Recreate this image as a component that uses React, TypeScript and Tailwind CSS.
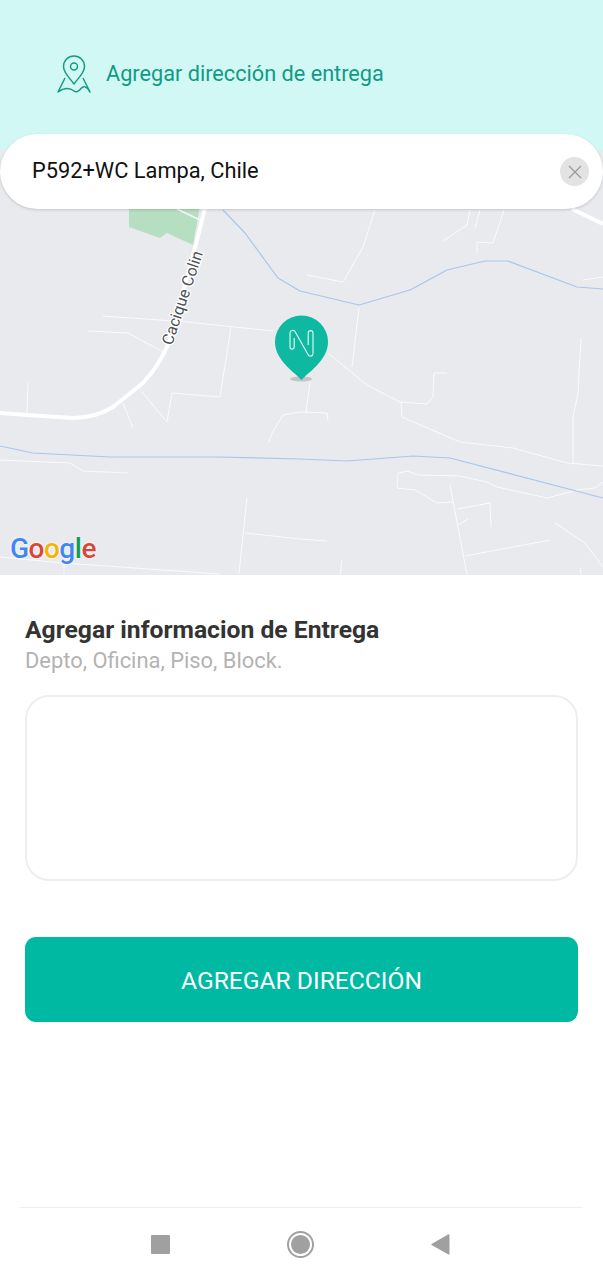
const THIN_ROADS = [
  'M103 316 L187 322 L273 331',
  'M231 327 L220 397 L172 393 L167 422 L142 392',
  'M88 331 L128 333 L165 353',
  'M123 403 L133 428',
  'M28 383 L27 413',
  'M0 460 L70 463 L83 471 L128 473',
  'M247 498 L239 573',
  'M245 533 L300 539 L327 541',
  'M0 557 L63 563 L220 574',
  'M64 563 L64 575',
  'M269 442 L272 433 L283 415 L300 412 L327 413 L328 420',
  'M310 382 L306 413',
  'M375 210 L363 247',
  'M307 275 L343 282 L363 247',
  'M359 308 L352 367',
  'M328 353 L367 385 L400 402 L427 404 L433 397 L434 373 L447 373',
  'M401 402 L402 417 L460 442 L513 448 L567 463 L603 466',
  'M581 338 L578 393 L573 417 L573 463',
  'M470 210 L467 225 L443 241',
  'M480 210 L475 228',
  'M504 210 L493 243 L477 242 L477 253',
  'M583 280 L603 277',
  'M603 482 L595 488 L577 490 L547 498 L497 487 L487 482 L460 476 L418 475 L408 471 L398 473 L397 488 L415 490 L437 503 L453 502',
  'M450 485 L467 575',
  'M457 509 L490 503 L491 527',
  'M458 525 L468 519',
  'M465 556 L550 540',
  'M555 523 L585 543 L603 567',
  'M580 568 L581 575',
  'M342 560 L340 575',
];

function MapDrawing() {
  return (
    <svg viewBox="0 150 603 425" className="block w-full h-full">
      <path d="M129 150 V227 L160 238 L167 233 L193 245 L210 150 Z" fill="#b5dfc0" />
      <path d="M177 209 L200 220" stroke="#f4f6f6" strokeWidth="1.5" fill="none" />
      <g stroke="#ffffff" strokeOpacity="0.8" strokeWidth="1" fill="none" strokeLinejoin="round">
        {THIN_ROADS.map((d) => (
          <path key={d} d={d} />
        ))}
      </g>
      <g stroke="#a9c6ea" strokeWidth="1.2" fill="none" strokeLinejoin="round">
        <path d="M223 210 L245 233 L278 278 L300 291 L359 305 L410 290 L447 270 L485 261 L508 261 L577 287 L603 289" />
        <path d="M0 446 L33 453 L110 457 L217 457 L300 459 L347 461 L413 456 L450 458 L603 498" />
      </g>
      <g stroke="#ffffff" strokeWidth="4" fill="none" strokeLinejoin="round">
        <path d="M207 200 L197 240 L170 340 Q160 365 143 383 L113 407 Q95 418 73 418 L27 415 L0 413" />
        <path d="M572 209 L603 224" />
      </g>
      <text
        transform="translate(172 346) rotate(-71.5)"
        fontSize="16"
        fill="#4d5156"
        stroke="#ffffff"
        strokeWidth="2.5"
        paintOrder="stroke"
      >
        Cacique Colin
      </text>
      {/* pin */}
      <ellipse cx="301" cy="379" rx="11" ry="2.5" fill="#9aa0a2" opacity="0.5" />
      <path
        d="M301.5 380 C296 373 275 361 275 342 A26.5 26.5 0 0 1 328 342 C328 361 307 373 301.5 380 Z"
        fill="#0fb8a0"
      />
      {/* N mark, one paperclip line */}
      <path
        d="M294.2 338 V347 A2.1 2.1 0 0 1 290 347 V333 A2.8 2.8 0 0 1 295 331.5 L308 354.5 A2.6 2.6 0 0 0 313 353.5 V333 A2.4 2.4 0 0 0 308.2 333 V345"
        stroke="#d9f5f0"
        strokeWidth="1.2"
        fill="none"
      />
    </svg>
  );
}

function AddressIcon() {
  return (
    <svg viewBox="0 0 34 38" className="w-[34px] h-[38px] shrink-0" fill="none" stroke="#149c86" strokeWidth="1.5" strokeLinejoin="round">
      <path d="M17 29 C12 22 6.5 18 6.5 11.5 A10.5 10.5 0 0 1 27.5 11.5 C27.5 18 22 22 17 29 Z" />
      <circle cx="17" cy="11.5" r="3.5" />
      <path d="M8 23 L1 37 Q6 33.5 10 33.5 T17 36 T24 33.5 T33 37 L26 23" />
    </svg>
  );
}

export default function App() {
  return (
    <div className="flex flex-col h-[1280px] bg-white font-['Roboto',sans-serif]">
      {/* Header */}
      <header className="h-[150px] shrink-0 bg-[#d1f8f5] pl-[57px] pt-[55px]">
        <div className="flex items-center gap-[15px]">
          <AddressIcon />
          <span className="text-[21.7px] leading-[38px] text-[#129a85]">Agregar dirección de entrega</span>
        </div>
      </header>

      {/* Map */}
      <section className="relative h-[425px] shrink-0 bg-[#e8eaed]">
        <MapDrawing />
        <div className="absolute left-0 right-0 top-[-16px] h-[75px] flex items-center justify-between pl-[32px] pr-[14px] bg-white rounded-[38px] shadow-[0_1px_3px_rgba(0,0,0,0.16)]">
          <span className="text-[21.8px] text-[#111]">P592+WC Lampa, Chile</span>
          <button className="w-[29px] h-[29px] rounded-full bg-[#e3e3e3] flex items-center justify-center">
            <svg viewBox="0 0 14 14" className="w-[14px] h-[14px]" stroke="#9a9a9a" strokeWidth="1.3">
              <path d="M1 1 L13 13 M13 1 L1 13" />
            </svg>
          </button>
        </div>
        <div className="absolute left-[10px] bottom-[8px] text-[28px] leading-[36px] font-medium tracking-[-0.5px] [text-shadow:0_0_2px_#fff,0_0_2px_#fff]">
          <span className="text-[#4285f4]">G</span>
          <span className="text-[#db4437]">o</span>
          <span className="text-[#f4b400]">o</span>
          <span className="text-[#4285f4]">g</span>
          <span className="text-[#0f9d58]">l</span>
          <span className="text-[#db4437]">e</span>
        </div>
      </section>

      {/* Form */}
      <main className="flex-1 px-[25px] pt-[40px]">
        <h2 className="text-[24.7px] leading-[30px] font-bold text-[#333]">Agregar informacion de Entrega</h2>
        <p className="mt-[3px] text-[21.9px] leading-[26px] text-[#b3b3b3]">Depto, Oficina, Piso, Block.</p>
        <textarea className="block mt-[21px] w-full h-[186px] resize-none rounded-[24px] border-2 border-[#eeeeee] bg-white" />
        <button className="mt-[56px] w-full h-[85px] pt-[3px] rounded-[11px] bg-[#00b9a2] text-[24.6px] text-white">AGREGAR DIRECCIÓN</button>
      </main>

      {/* Android nav */}
      <nav className="mx-[20px] h-[73px] pr-[2px] shrink-0 border-t border-[#eeeeee] flex items-center justify-center gap-[117px]">
        <div className="w-[19px] h-[19px] bg-[#a0a0a0] rounded-[1px]" />
        <div className="w-[27px] h-[27px] rounded-full border-2 border-[#a0a0a0] flex items-center justify-center">
          <div className="w-[19px] h-[19px] rounded-full bg-[#a0a0a0]" />
        </div>
        <svg viewBox="0 0 19 21" className="w-[19px] h-[21px]" fill="#a0a0a0">
          <path d="M18.5 1 V20 Q18 21 17 20.3 L0.5 11 Q0 10.5 0.5 10 L17 0.5 Q18 0 18.5 1 Z" />
        </svg>
      </nav>
    </div>
  );
}
